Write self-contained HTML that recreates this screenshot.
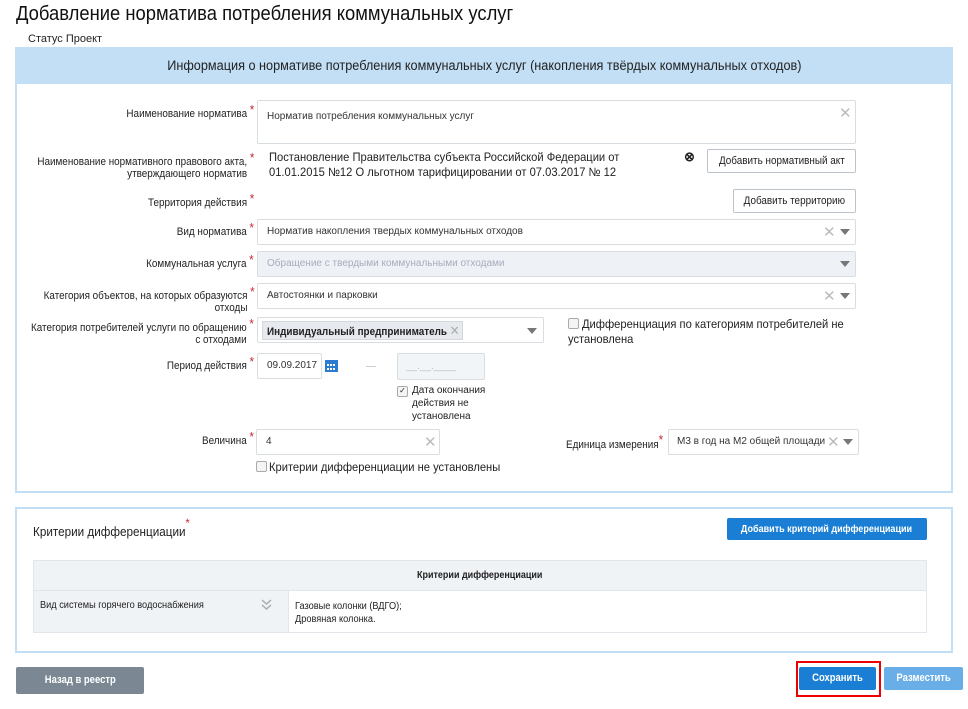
<!DOCTYPE html>
<html><head><meta charset="utf-8"><style>
body{margin:0;width:968px;height:709px;background:#fff;font-family:"Liberation Sans",Arial,sans-serif;color:#222;position:relative;overflow:hidden}
.a{position:absolute}
.n{display:inline-block;transform:scaleX(.9);transform-origin:center;white-space:nowrap}
.nl{transform:scaleX(.92);transform-origin:left top;white-space:nowrap}
.lbl{position:absolute;right:721px;text-align:right;font-size:11px;line-height:12px;color:#222;transform:scaleX(.9);transform-origin:right top;white-space:nowrap}
.lbl i{position:absolute;right:-8px;top:-4px;color:#c0282d;font-style:normal;font-size:13px}
.inp{position:absolute;border:1px solid #d8dde2;background:#fff;box-sizing:border-box;font-size:10px;color:#333;padding-left:9px;border-radius:2px;white-space:nowrap}
.btn{position:absolute;border:1px solid #bcc3ca;background:#fff;box-sizing:border-box;font-size:11px;text-align:center;border-radius:2px;white-space:nowrap}
.x{position:absolute;color:#bbb;font-size:15px}
.tri{position:absolute;width:0;height:0;border-left:5px solid transparent;border-right:5px solid transparent;border-top:6px solid #777}
.cb{position:absolute;width:9px;height:9px;border:1px solid #aaa;background:#f4f4f4;border-radius:2px}
</style></head><body>
<div class="a nl" style="left:16px;top:3px;font-size:20px;color:#111">Добавление норматива потребления коммунальных услуг</div>
<div class="a" style="left:28px;top:33px;font-size:11px">Статус Проект</div>

<div class="a" style="left:15px;top:47px;width:934px;height:444px;border:2px solid #c3dff5;border-top:0"></div>
<div class="a" style="left:15px;top:47px;width:938px;height:37px;background:#c3dff5;text-align:center;line-height:38px;font-size:13.5px;color:#222"><span class="n" style="transform:scaleX(.94)">Информация о нормативе потребления коммунальных услуг (накопления твёрдых коммунальных отходов)</span></div>

<div class="lbl" style="top:108px">Наименование норматива<i>*</i></div>
<div class="inp" style="left:257px;top:100px;width:599px;height:44px;padding-top:10px">Норматив потребления коммунальных услуг</div>
<div class="x" style="left:839px;top:104px">✕</div>

<div class="lbl" style="top:156px">Наименование нормативного правового акта,<br>утверждающего норматив<i>*</i></div>
<div class="a nl" style="left:269px;top:150px;font-size:12px;line-height:15px;color:#222;transform:scaleX(.93)">Постановление Правительства субъекта Российской Федерации от<br>01.01.2015 №12 О льготном тарифицировании от 07.03.2017 № 12</div>
<div class="a" style="left:684px;top:149px;font-size:13px;font-weight:bold">⊗</div>
<div class="btn" style="left:707px;top:149px;width:149px;height:24px;line-height:22px"><span class="n">Добавить нормативный акт</span></div>

<div class="lbl" style="top:197px">Территория действия<i>*</i></div>
<div class="btn" style="left:733px;top:189px;width:123px;height:24px;line-height:22px"><span class="n">Добавить территорию</span></div>

<div class="lbl" style="top:226px">Вид норматива<i>*</i></div>
<div class="inp" style="left:257px;top:219px;width:599px;height:26px;line-height:24px">Норматив накопления твердых коммунальных отходов</div>
<div class="x" style="left:823px;top:223px">✕</div><div class="tri" style="left:840px;top:229px"></div>

<div class="lbl" style="top:258px">Коммунальная услуга<i>*</i></div>
<div class="inp" style="left:257px;top:251px;width:599px;height:26px;line-height:24px;background:#eef2f7;color:#aab">Обращение с твердыми коммунальными отходами</div>
<div class="tri" style="left:840px;top:261px"></div>

<div class="lbl" style="top:290px">Категория объектов, на которых образуются<br>отходы<i>*</i></div>
<div class="inp" style="left:257px;top:283px;width:599px;height:26px;line-height:24px">Автостоянки и парковки</div>
<div class="x" style="left:823px;top:287px">✕</div><div class="tri" style="left:840px;top:293px"></div>

<div class="lbl" style="top:322px">Категория потребителей услуги по обращению<br>с отходами<i>*</i></div>
<div class="inp" style="left:257px;top:317px;width:287px;height:26px"></div>
<div class="a" style="left:262px;top:321px;width:201px;height:19px;background:#e6e9ee;border:1px solid #d4d8dd;box-sizing:border-box;font-size:11px;font-weight:bold;line-height:17px;padding-left:4px;white-space:nowrap;overflow:hidden"><span class="n" style="transform:scaleX(.9);transform-origin:left">Индивидуальный предприниматель <span style="color:#aaa;font-weight:normal;font-size:13px">✕</span></span></div>
<div class="tri" style="left:527px;top:328px"></div>
<div class="cb" style="left:568px;top:318px"></div>
<div class="a nl" style="left:582px;top:317px;font-size:12px;line-height:15px;transform:scaleX(.93)">Дифференциация по категориям потребителей не</div>
<div class="a nl" style="left:568px;top:332px;font-size:12px;line-height:15px;transform:scaleX(.93)">установлена</div>

<div class="lbl" style="top:360px">Период действия<i>*</i></div>
<div class="inp" style="left:257px;top:353px;width:65px;height:26px;line-height:24px">09.09.2017</div>
<svg class="a" style="left:325px;top:359px" width="13" height="13"><rect x="0" y="1" width="13" height="12" fill="#2b7bd0"/><g fill="#fff"><rect x="2" y="5" width="2" height="2"/><rect x="5" y="5" width="2" height="2"/><rect x="8" y="5" width="2" height="2"/><rect x="2" y="9" width="2" height="2"/><rect x="5" y="9" width="2" height="2"/><rect x="8" y="9" width="2" height="2"/></g></svg>
<div class="a" style="left:366px;top:366px;width:10px;height:1px;background:#ccc"></div>
<div class="inp" style="left:397px;top:353px;width:88px;height:27px;background:#f2f5f8;color:#bbb;line-height:26px;padding-left:8px">__.__.____</div>
<div class="cb" style="left:397px;top:386px;font-size:8px;line-height:8px;text-align:center">✓</div>
<div class="a" style="left:412px;top:384px;font-size:10px;line-height:13px">Дата окончания<br>действия не<br>установлена</div>

<div class="lbl" style="top:435px">Величина<i>*</i></div>
<div class="inp" style="left:256px;top:429px;width:184px;height:26px;line-height:24px">4</div>
<div class="x" style="left:424px;top:433px">✕</div>
<div class="cb" style="left:256px;top:461px"></div>
<div class="a nl" style="left:269px;top:460px;font-size:12px;transform:scaleX(.93)">Критерии дифференциации не установлены</div>

<div class="a nl" style="left:566px;top:436px;font-size:11px;transform:scaleX(.9)">Единица измерения<span style="color:#c0282d;position:relative;top:-4px;font-size:13px">*</span></div>
<div class="inp" style="left:668px;top:429px;width:191px;height:26px;line-height:24px;padding-left:8px">М3 в год на М2 общей площади</div>
<div class="x" style="left:827px;top:433px">✕</div><div class="tri" style="left:843px;top:439px"></div>

<div class="a" style="left:15px;top:507px;width:934px;height:142px;border:2px solid #c3dff5"></div>
<div class="a nl" style="left:33px;top:524px;font-size:13px;transform:scaleX(.9)">Критерии дифференциации<span style="color:#c0282d;position:relative;top:-9px;font-size:12px">*</span></div>
<div class="a" style="left:727px;top:518px;width:200px;height:22px;background:#1a7fd4;color:#fff;font-size:10.5px;font-weight:bold;text-align:center;line-height:22px;border-radius:2px"><span class="n" style="transform:scaleX(.86)">Добавить критерий дифференциации</span></div>
<div class="a" style="left:33px;top:560px;width:894px;height:73px;border:1px solid #e2e6ea;box-sizing:border-box"></div>
<div class="a" style="left:34px;top:561px;width:892px;height:29px;background:#f0f3f6;border-bottom:1px solid #e2e6ea;text-align:center;line-height:29px;font-size:10px;font-weight:bold"><span class="n">Критерии дифференциации</span></div>
<div class="a" style="left:34px;top:591px;width:254px;height:41px;background:#f0f3f6;border-right:1px solid #e2e6ea"></div>
<div class="a nl" style="left:40px;top:600px;font-size:10px">Вид системы горячего водоснабжения</div>
<svg class="a" style="left:261px;top:599px" width="11" height="12"><path d="M1 1l4.5 4 4.5-4M1 6l4.5 4 4.5-4" fill="none" stroke="#aaa" stroke-width="1.5"/></svg>
<div class="a nl" style="left:295px;top:600px;font-size:10px;line-height:13px">Газовые колонки (ВДГО);<br>Дровяная колонка.</div>

<div class="a" style="left:16px;top:667px;width:128px;height:27px;background:#7b8894;color:#fff;font-size:11px;font-weight:bold;text-align:center;line-height:27px;border-radius:2px"><span class="n" style="transform:scaleX(.86)">Назад в реестр</span></div>
<div class="a" style="left:796px;top:661px;width:81px;height:32px;border:2px solid #e00"></div>
<div class="a" style="left:799px;top:667px;width:77px;height:23px;background:#1a7fd4;color:#fff;font-size:11px;font-weight:bold;text-align:center;line-height:23px;border-radius:2px"><span class="n" style="transform:scaleX(.86)">Сохранить</span></div>
<div class="a" style="left:884px;top:667px;width:79px;height:23px;background:#6aaee8;color:#fff;font-size:11px;font-weight:bold;text-align:center;line-height:23px;border-radius:2px"><span class="n" style="transform:scaleX(.86)">Разместить</span></div>
</body></html>
